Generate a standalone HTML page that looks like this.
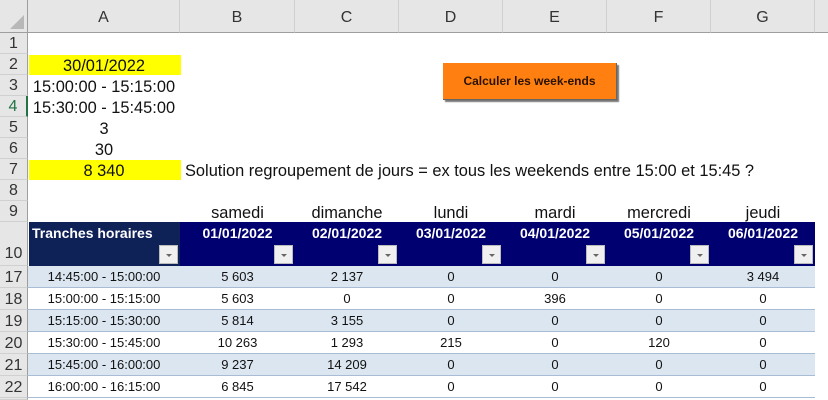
<!DOCTYPE html>
<html><head><meta charset="utf-8"><style>
*{margin:0;padding:0;box-sizing:border-box}
body{width:828px;height:400px;overflow:hidden;background:#fff;font-family:"Liberation Sans",Arial,sans-serif;position:relative}
.a{position:absolute}
.ch{position:absolute;top:0;height:33px;background:#e6e6e6;border-bottom:1px solid #9e9e9e;border-right:1px solid #d0d0d0;font-size:16px;color:#333;text-align:center;line-height:36px}
.rh{position:absolute;left:0;width:28px;background:#e6e6e6;border-bottom:1px solid #d0d0d0;border-right:1px solid #9e9e9e;font-size:16px;color:#333;text-align:center}
.t{position:absolute;font-size:16.4px;color:#111;text-align:center;white-space:nowrap}
.hd{position:absolute;top:222px;height:44px;background:#000070;color:#fff;font-weight:bold;font-size:14px;text-align:center;line-height:23px}
.dd{position:absolute;bottom:2px;right:2px;width:19px;height:19px;background:#f0f0f0;border:1px solid #bbb}
.dd:after{content:"";position:absolute;left:6px;top:8px;border-left:3px solid transparent;border-right:3px solid transparent;border-top:3px solid #666}
.row{position:absolute;left:28px;width:787px;height:22px;border-bottom:1px solid #a9bcd6;font-size:13px;color:#111}
.row span{position:absolute;top:3px;text-align:center}
</style></head><body>
<div class="ch" style="left:0;width:28px;border-right:1px solid #9e9e9e"><div class="a" style="right:3px;bottom:3px;width:0;height:0;border-left:14px solid transparent;border-bottom:14px solid #b8b8b8"></div></div>
<div class="ch" style="left:28px;width:152px">A</div>
<div class="ch" style="left:180px;width:115px">B</div>
<div class="ch" style="left:295px;width:104px">C</div>
<div class="ch" style="left:399px;width:104px">D</div>
<div class="ch" style="left:503px;width:104px">E</div>
<div class="ch" style="left:607px;width:104px">F</div>
<div class="ch" style="left:711px;width:104px">G</div>
<div class="ch" style="left:815px;width:13px;border-right:none"></div>

<div class="rh" style="top:33px;height:21px;line-height:22px">1</div>
<div class="rh" style="top:54px;height:21px;line-height:22px">2</div>
<div class="rh" style="top:75px;height:21px;line-height:22px">3</div>
<div class="rh" style="top:96px;height:21px;line-height:22px;color:#217346;border-right:2px solid #217346">4</div>
<div class="rh" style="top:117px;height:21px;line-height:22px">5</div>
<div class="rh" style="top:138px;height:21px;line-height:22px">6</div>
<div class="rh" style="top:159px;height:21px;line-height:22px">7</div>
<div class="rh" style="top:180px;height:21px;line-height:22px">8</div>
<div class="rh" style="top:201px;height:21px;line-height:22px">9</div>
<div class="rh" style="top:222px;height:44px;line-height:64px">10</div>
<div class="rh" style="top:266px;height:22px;line-height:23px">17</div>
<div class="rh" style="top:288px;height:22px;line-height:23px">18</div>
<div class="rh" style="top:310px;height:22px;line-height:23px">19</div>
<div class="rh" style="top:332px;height:22px;line-height:23px">20</div>
<div class="rh" style="top:354px;height:22px;line-height:23px">21</div>
<div class="rh" style="top:376px;height:22px;line-height:23px">22</div>
<div class="rh" style="top:398px;height:2px"></div>

<div class="a" style="left:29px;top:55px;width:152px;height:20px;background:#ffff00"></div>
<div class="a" style="left:29px;top:160px;width:152px;height:20px;background:#ffff00"></div>
<div class="t" style="left:28px;width:152px;top:57px">30/01/2022</div>
<div class="t" style="left:28px;width:152px;top:78px">15:00:00 - 15:15:00</div>
<div class="t" style="left:28px;width:152px;top:99px">15:30:00 - 15:45:00</div>
<div class="t" style="left:28px;width:152px;top:120px">3</div>
<div class="t" style="left:28px;width:152px;top:141px">30</div>
<div class="t" style="left:28px;width:152px;top:162px">8 340</div>
<div class="t" style="left:185px;top:162px;text-align:left">Solution regroupement de jours = ex tous les weekends entre 15:00 et 15:45 ?</div>

<div class="a" style="left:443px;top:63px;width:174px;height:37px;background:#ff8010;box-shadow:2px 2px 1px #777;border-right:1px solid #666;border-bottom:1px solid #666;font-size:12px;font-weight:bold;color:#2a1200;text-align:center;line-height:37px">Calculer les week-ends</div>

<div class="t" style="left:180px;width:115px;top:204px">samedi</div>
<div class="t" style="left:295px;width:104px;top:204px">dimanche</div>
<div class="t" style="left:399px;width:104px;top:204px">lundi</div>
<div class="t" style="left:503px;width:104px;top:204px">mardi</div>
<div class="t" style="left:607px;width:104px;top:204px">mercredi</div>
<div class="t" style="left:711px;width:104px;top:204px">jeudi</div>

<div class="hd" style="left:29px;width:151px;background:#0f2258;text-align:left;padding-left:3px">Tranches horaires<div class="dd"></div></div>
<div class="hd" style="left:180px;width:115px">01/01/2022<div class="dd"></div></div>
<div class="hd" style="left:295px;width:104px">02/01/2022<div class="dd"></div></div>
<div class="hd" style="left:399px;width:104px">03/01/2022<div class="dd"></div></div>
<div class="hd" style="left:503px;width:104px">04/01/2022<div class="dd"></div></div>
<div class="hd" style="left:607px;width:104px">05/01/2022<div class="dd"></div></div>
<div class="hd" style="left:711px;width:104px">06/01/2022<div class="dd"></div></div>

<div class="row" style="top:266px;background:#dce6f1"><span style="left:0;width:152px">14:45:00 - 15:00:00</span><span style="left:152px;width:115px">5 603</span><span style="left:267px;width:104px">2 137</span><span style="left:371px;width:104px">0</span><span style="left:475px;width:104px">0</span><span style="left:579px;width:104px">0</span><span style="left:683px;width:104px">3 494</span></div>
<div class="row" style="top:288px;background:#fff"><span style="left:0;width:152px">15:00:00 - 15:15:00</span><span style="left:152px;width:115px">5 603</span><span style="left:267px;width:104px">0</span><span style="left:371px;width:104px">0</span><span style="left:475px;width:104px">396</span><span style="left:579px;width:104px">0</span><span style="left:683px;width:104px">0</span></div>
<div class="row" style="top:310px;background:#dce6f1"><span style="left:0;width:152px">15:15:00 - 15:30:00</span><span style="left:152px;width:115px">5 814</span><span style="left:267px;width:104px">3 155</span><span style="left:371px;width:104px">0</span><span style="left:475px;width:104px">0</span><span style="left:579px;width:104px">0</span><span style="left:683px;width:104px">0</span></div>
<div class="row" style="top:332px;background:#fff"><span style="left:0;width:152px">15:30:00 - 15:45:00</span><span style="left:152px;width:115px">10 263</span><span style="left:267px;width:104px">1 293</span><span style="left:371px;width:104px">215</span><span style="left:475px;width:104px">0</span><span style="left:579px;width:104px">120</span><span style="left:683px;width:104px">0</span></div>
<div class="row" style="top:354px;background:#dce6f1"><span style="left:0;width:152px">15:45:00 - 16:00:00</span><span style="left:152px;width:115px">9 237</span><span style="left:267px;width:104px">14 209</span><span style="left:371px;width:104px">0</span><span style="left:475px;width:104px">0</span><span style="left:579px;width:104px">0</span><span style="left:683px;width:104px">0</span></div>
<div class="row" style="top:376px;background:#fff"><span style="left:0;width:152px">16:00:00 - 16:15:00</span><span style="left:152px;width:115px">6 845</span><span style="left:267px;width:104px">17 542</span><span style="left:371px;width:104px">0</span><span style="left:475px;width:104px">0</span><span style="left:579px;width:104px">0</span><span style="left:683px;width:104px">0</span></div>
</body></html>
